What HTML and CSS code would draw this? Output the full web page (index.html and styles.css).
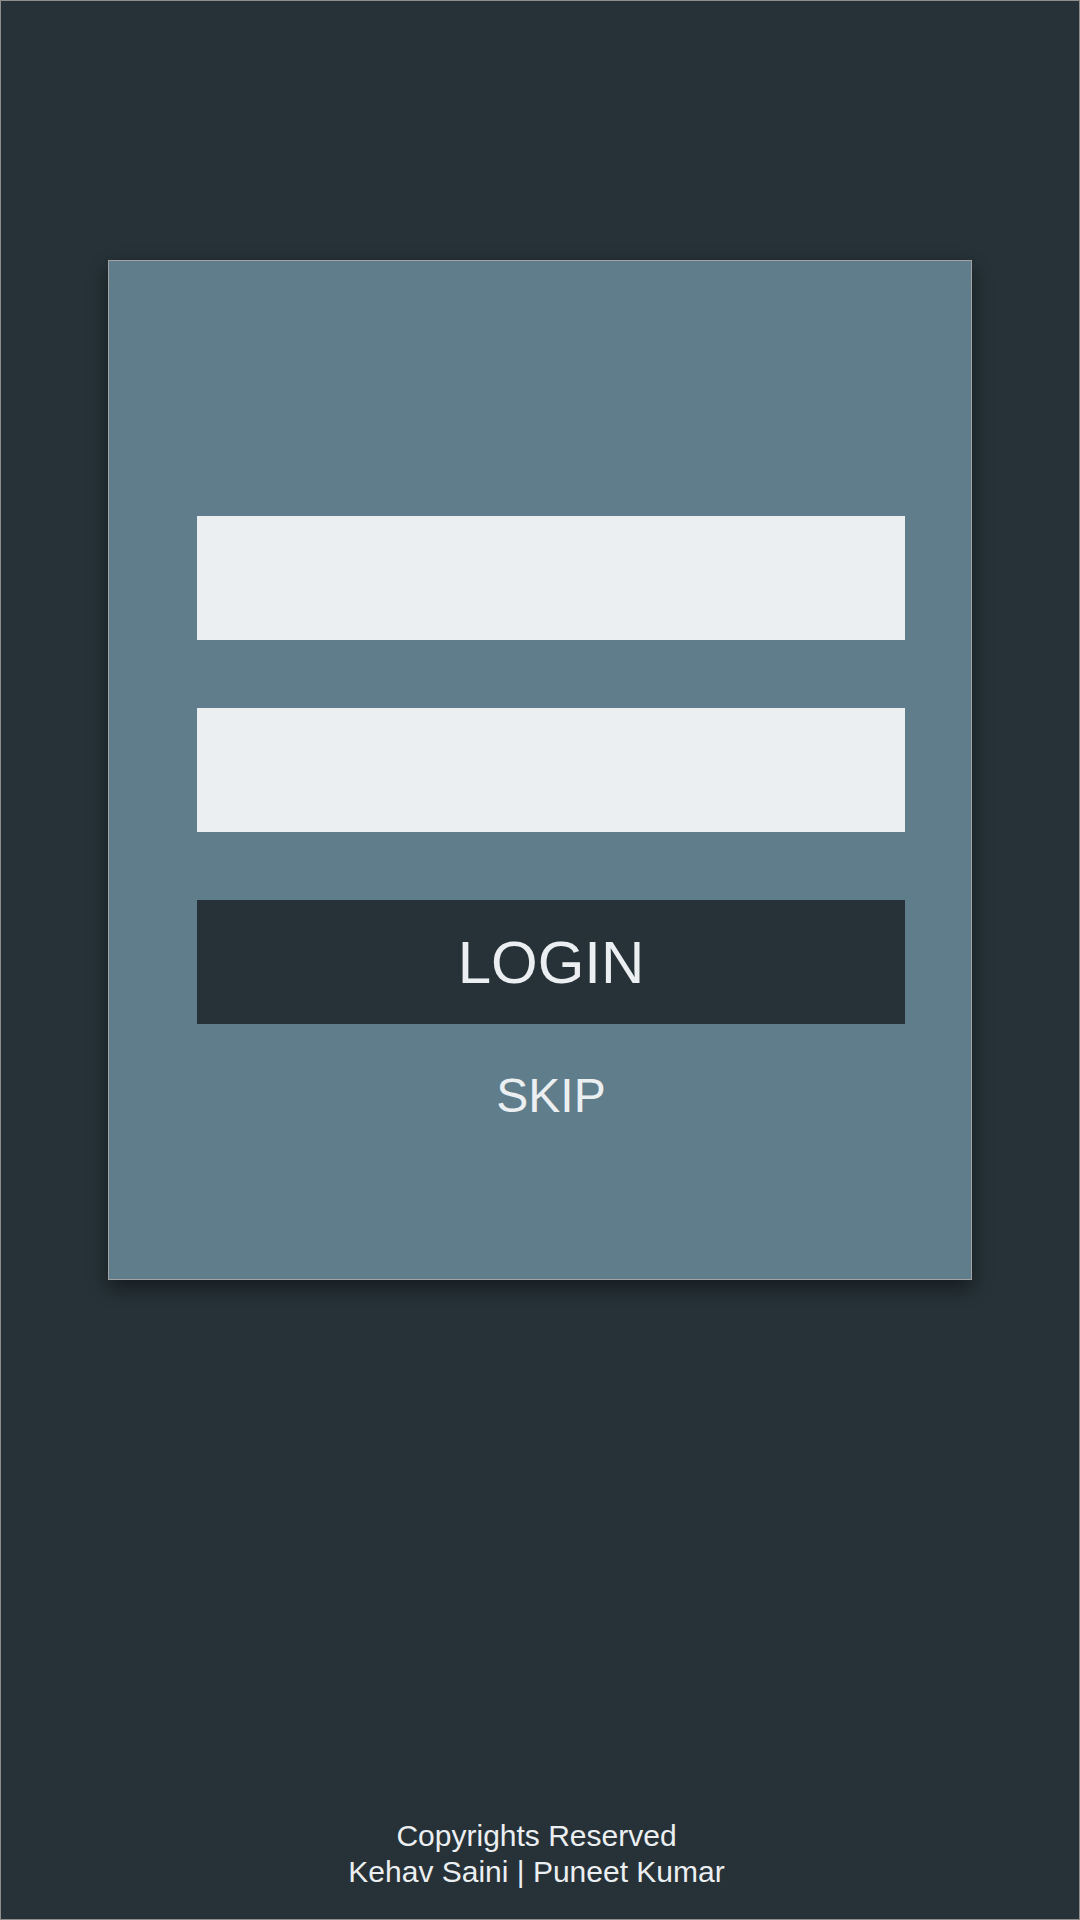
FILE: index.html
```html
<!DOCTYPE html>
<html lang="en">
<head>
<meta charset="utf-8">
<title>Login</title>
<link rel="stylesheet" href="styles.css">
</head>
<body>
<div class="page">
  <main class="card">
    <div class="field"></div>
    <div class="field"></div>
    <div class="btn-login">LOGIN</div>
    <div class="skip">SKIP</div>
  </main>
  <footer class="footer">
    <div>Copyrights Reserved</div>
    <div>Kehav Saini | Puneet Kumar</div>
  </footer>
</div>
</body>
</html>
```

FILE: styles.css
```css
html, body {
  margin: 0;
  padding: 0;
}
body {
  font-family: "Liberation Sans", Arial, sans-serif;
  color: #eceff1;
}
.page {
  box-sizing: border-box;
  width: 1080px;
  height: 1920px;
  border: 1px solid #8e8e8e;
  background: #263238;
  display: flex;
  flex-direction: column;
  align-items: flex-start;
  padding-top: 259px;
}
.card {
  box-sizing: border-box;
  margin-left: 107px;
  width: 864px;
  height: 1020px;
  background: #607d8b;
  border: 1px solid #a3a3a3;
  box-shadow: 0 8px 18px rgba(0, 0, 0, 0.45);
  padding: 255px 0 0 88px;
  display: flex;
  flex-direction: column;
  align-items: flex-start;
}
.field {
  width: 708px;
  height: 124px;
  background: #eceff1;
  margin-bottom: 68px;
}
.btn-login {
  width: 708px;
  height: 124px;
  background: #263238;
  display: flex;
  align-items: center;
  justify-content: center;
  font-size: 60px;
  line-height: 1;
  padding-top: 2px;
  box-sizing: border-box;
}
.skip {
  width: 708px;
  text-align: center;
  font-size: 48px;
  line-height: 55px;
  margin-top: 44px;
}
.footer {
  margin-top: auto;
  align-self: stretch;
  text-align: center;
  font-size: 30px;
  line-height: 36px;
  padding-right: 7px;
  padding-bottom: 29px;
}
```
